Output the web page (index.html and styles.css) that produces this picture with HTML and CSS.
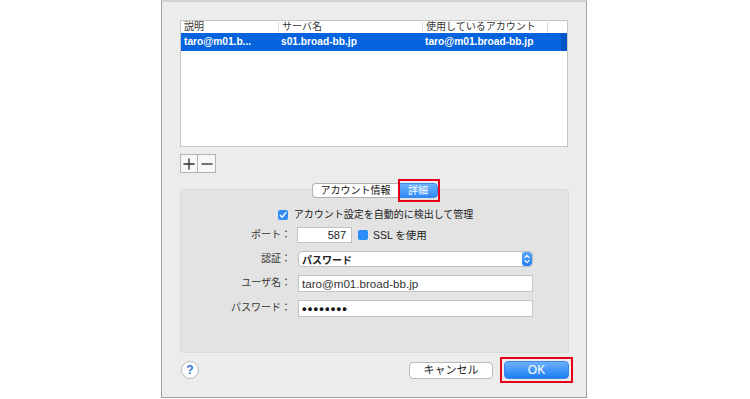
FILE: index.html
```html
<!DOCTYPE html>
<html lang="ja">
<head>
<meta charset="utf-8">
<link rel="stylesheet" href="styles.css">
</head>
<body>
<div class="window">
  <div class="table">
    <div class="thead">
      <div class="th c1">説明</div>
      <div class="th c2">サーバ名</div>
      <div class="th c3">使用しているアカウント</div>
      <div class="th c4"></div>
    </div>
    <div class="row sel">
      <div class="td c1">taro@m01.b...</div>
      <div class="td c2">s01.broad-bb.jp</div>
      <div class="td c3">taro@m01.broad-bb.jp</div>
      <div class="td c4"><span class="edge"></span></div>
    </div>
  </div>

  <div class="pm">
    <button class="pmbtn" aria-label="追加"><svg width="12" height="12" viewBox="0 0 12 12"><path d="M6 0.5V11.5M0.5 6H11.5" stroke="#2b2b2b" stroke-width="1.3" fill="none"/></svg></button>
    <button class="pmbtn minus" aria-label="削除"><svg width="12" height="12" viewBox="0 0 12 12"><path d="M0.5 6H11.5" stroke="#2b2b2b" stroke-width="1.3" fill="none"/></svg></button>
  </div>

  <div class="panel">
    <div class="tabs">
      <span class="tab">アカウント情報</span>
      <span class="tab active">詳細</span>
    </div>

    <div class="auto">
      <span class="cb checked"><svg width="10" height="10" viewBox="0 0 10 10"><path d="M2.3 5.2L4.2 7.2L7.8 2.6" stroke="#fff" stroke-width="1.4" fill="none" stroke-linecap="round" stroke-linejoin="round"/></svg></span>
      <span>アカウント設定を自動的に検出して管理</span>
    </div>

    <div class="form">
      <div class="lbl">ポート：</div>
      <div class="ctl">
        <div class="field port">587</div>
        <span class="cb blue"></span>
        <span class="ssl">SSL を使用</span>
      </div>

      <div class="lbl">認証：</div>
      <div class="ctl">
        <div class="popup">
          <span class="popup-text">パスワード</span>
          <span class="stepper"><svg width="10" height="14" viewBox="0 0 10 14"><path d="M2.8 5.6L5 3.4L7.2 5.6M2.8 8.4L5 10.6L7.2 8.4" stroke="#fff" stroke-width="1.1" fill="none" stroke-linecap="round" stroke-linejoin="round"/></svg></span>
        </div>
      </div>

      <div class="lbl">ユーザ名：</div>
      <div class="ctl"><div class="field text">taro@m01.broad-bb.jp</div></div>

      <div class="lbl">パスワード：</div>
      <div class="ctl"><div class="field dots">••••••••</div></div>
    </div>
  </div>

  <div class="footer">
    <span class="help">?</span>
    <span class="spacer"></span>
    <button class="btn cancel">キャンセル</button>
    <button class="btn ok">OK</button>
  </div>
</div>
</body>
</html>
```

FILE: styles.css
```css
html, body {
  margin: 0;
  padding: 0;
  background: #ffffff;
}

body {
  font-family: "Liberation Sans", "Noto Sans CJK JP", sans-serif;
  color: #222;
}

.window {
  box-sizing: border-box;
  width: 426px;
  height: 398px;
  margin-left: 161px;
  background: #ececec;
  border: 1px solid #a0a0a0;
  border-top: 2px solid #d2d2d2;
  padding: 18px 17px 0 18px;
  display: flex;
  flex-direction: column;
}

/* table */
.table {
  box-sizing: border-box;
  width: 388px;
  height: 127px;
  background: #fff;
  border: 1px solid #c6c6c6;
}

.thead {
  display: flex;
  height: 12px;
  font-size: 10px;
  line-height: 12px;
  color: #333;
}

.th {
  position: relative;
  box-sizing: border-box;
  padding-left: 3px;
  white-space: nowrap;
}

.th::after {
  content: "";
  position: absolute;
  right: 0;
  top: 1px;
  bottom: 0;
  width: 1px;
  background: #dadada;
}

.th.c4::after { display: none; }

.c1 { width: 98px; }
.c2 { width: 144px; }
.c3 { width: 125px; }
.c4 { flex: 1; }

.row {
  display: flex;
  height: 18px;
}

.row.sel {
  background: #0563dd;
  color: #fff;
  font-weight: bold;
  font-size: 10.2px;
  line-height: 18px;
}

.td {
  box-sizing: border-box;
  padding-left: 3px;
  white-space: nowrap;
}

.row .c2 { padding-left: 2px; }
.row .c3 { padding-left: 2px; }

.row .c4 {
  display: flex;
  justify-content: flex-end;
  padding-left: 0;
}

.edge {
  width: 6px;
  height: 18px;
  background: #0456c6;
}

/* plus / minus */
.pm {
  display: flex;
  margin-top: 7px;
}

.pmbtn {
  box-sizing: border-box;
  width: 18px;
  height: 19px;
  margin: 0;
  padding: 0;
  border: 1px solid #b4b4b4;
  background: #f7f7f7;
  display: flex;
  align-items: center;
  justify-content: center;
}

.pmbtn.minus { border-left: none; }

/* panel */
.panel {
  box-sizing: border-box;
  margin-top: 16px;
  width: 389px;
  height: 164px;
  background: #e3e3e3;
  border: 1px solid #dadada;
  border-radius: 4px;
  display: flex;
  flex-direction: column;
  align-items: center;
}

.tabs {
  display: flex;
  margin-top: -7px;
  height: 15px;
}

.tab {
  box-sizing: border-box;
  height: 15px;
  font-size: 10px;
  line-height: 13px;
  text-align: center;
  white-space: nowrap;
  border: 1px solid #b0b0b0;
  background: #fff;
  color: #111;
}

.tab:first-child {
  width: 87px;
  border-radius: 4px 0 0 4px;
  border-right: none;
}

.tab.active {
  position: relative;
  width: 39px;
  border-radius: 0 4px 4px 0;
  border-color: #3c86ea;
  background: linear-gradient(#6eb2fb, #2f8af6);
  color: #fff;
}

.tab.active::after {
  content: "";
  position: absolute;
  left: -2px;
  right: -3px;
  top: -5px;
  bottom: -5px;
  border: 2px solid #e6001a;
}

.auto {
  display: flex;
  align-items: center;
  gap: 6px;
  margin-top: 10px;
  height: 14px;
  font-size: 10px;
  line-height: 14px;
  color: #222;
}

.cb {
  box-sizing: border-box;
  width: 10px;
  height: 10px;
  border-radius: 2px;
  display: inline-flex;
}

.cb.checked {
  background: #2f8cf5;
  margin-left: 2px;
}

.cb.blue {
  background: #2a8cf6;
}

/* form */
.form {
  align-self: flex-start;
  display: grid;
  grid-template-columns: 110px 235px;
  grid-template-rows: 16px 16px 17px 17px;
  column-gap: 7px;
  row-gap: 8px;
  margin-top: 5px;
}

.lbl {
  font-size: 10px;
  line-height: 16px;
  text-align: right;
  color: #333;
  white-space: nowrap;
}

.ctl {
  display: flex;
  align-items: center;
}

.field {
  box-sizing: border-box;
  height: 100%;
  width: 235px;
  background: #fff;
  border: 1px solid #c3c3c3;
  padding-left: 3px;
  font-size: 11.6px;
  line-height: 15px;
  color: #333;
  white-space: nowrap;
}

.field.port {
  width: 55px;
  margin-left: -1px;
  text-align: right;
  padding-right: 5px;
  font-size: 11px;
  color: #222;
}

.ctl .cb.blue {
  margin-left: 6px;
}

.ssl {
  margin-left: 5px;
  font-size: 10.5px;
  line-height: 16px;
  color: #222;
}

.field.dots {
  font-size: 13px;
  letter-spacing: 1.2px;
  line-height: 15px;
  color: #111;
  font-weight: bold;
}

.popup {
  box-sizing: border-box;
  width: 235px;
  height: 16px;
  background: #fff;
  border: 1px solid #c0c0c0;
  border-radius: 4px;
  display: flex;
  align-items: center;
  justify-content: space-between;
  overflow: hidden;
}

.popup-text {
  padding-left: 3px;
  font-size: 10px;
  font-weight: bold;
  color: #222;
}

.stepper {
  width: 10px;
  height: 14px;
  background: linear-gradient(#5aa4fa, #1f80f5);
  border-radius: 3px;
  display: flex;
}

/* footer */
.footer {
  display: flex;
  align-items: center;
  margin-top: 8px;
  height: 18px;
}

.help {
  box-sizing: border-box;
  width: 18px;
  height: 18px;
  margin-left: 1px;
  border-radius: 50%;
  border: 1px solid #bdbdbd;
  background: #fff;
  color: #2e6fdc;
  font-weight: bold;
  font-size: 12px;
  line-height: 16px;
  text-align: center;
}

.spacer { flex: 1; }

.btn {
  box-sizing: border-box;
  margin: 0;
  padding: 0;
  font-family: "Liberation Sans", "Noto Sans CJK JP", sans-serif;
  border-radius: 4px;
}

.cancel {
  width: 84px;
  height: 17px;
  margin-top: 1px;
  background: #fff;
  border: 1px solid #b9b9b9;
  font-size: 11px;
  line-height: 15px;
  color: #222;
}

.ok {
  position: relative;
  width: 65px;
  height: 18px;
  margin-left: 11px;
  background: linear-gradient(#6cb0fc, #1d7ff5);
  border: 1px solid #3d86e8;
  color: #fff;
  font-size: 12px;
  line-height: 16px;
}

.ok::after {
  content: "";
  position: absolute;
  left: -5px;
  right: -5px;
  top: -5px;
  bottom: -5px;
  border: 2px solid #e6001a;
}
```
